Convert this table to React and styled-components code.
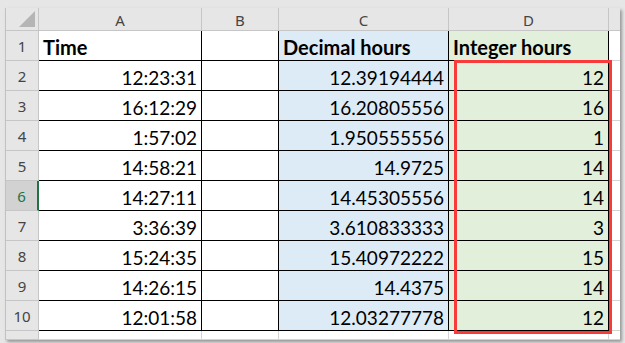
import React from 'react';
import styled, { createGlobalStyle, css } from 'styled-components';

const GlobalStyle = createGlobalStyle`
  html, body {
    margin: 0;
    padding: 0;
    background: #e6e6e6;
  }
`;

// spreadsheet data
const rows = [
  ['12:23:31', '12.39194444', '12'],
  ['16:12:29', '16.20805556', '16'],
  ['1:57:02', '1.950555556', '1'],
  ['14:58:21', '14.9725', '14'],
  ['14:27:11', '14.45305556', '14'],
  ['3:36:39', '3.610833333', '3'],
  ['15:24:35', '15.40972222', '15'],
  ['14:26:15', '14.4375', '14'],
  ['12:01:58', '12.03277778', '12'],
];

const columns = ['A', 'B', 'C', 'D'];
const ACTIVE_ROW = 6;

const Frame = styled.div`
  width: 625px;
  height: 343px;
  box-sizing: border-box;
  padding: 8px 0 0 5px;
  background: #e6e6e6;
  overflow: hidden;
`;

const Sheet = styled.div`
  position: relative;
  display: grid;
  grid-template-columns: 33px 163px 77px 170px 160px 11px;
  grid-template-rows: 23px repeat(10, 30px) 9px;
  width: 615px;
  box-sizing: border-box;
  border-left: 1px solid #c2c2c2;
  background: #fff;
  box-shadow: 2px 2px 3px rgba(0, 0, 0, 0.35);
`;

const HeadCell = styled.div`
  display: flex;
  align-items: center;
  justify-content: center;
  box-sizing: border-box;
  background: ${(p) => (p.$active ? '#d2d2d2' : '#e6e6e6')};
  color: ${(p) => (p.$active ? '#217346' : '#444')};
  font-family: 'Noto Sans', 'Open Sans', sans-serif;
  font-size: 15px;
  border-bottom: 1px solid #c6c6c6;
  border-right: ${(p) =>
    p.$active ? '2px solid #217346' : p.$noRight ? 'none' : '1px solid #c6c6c6'};
  padding-top: 1px;
`;

const Corner = styled(HeadCell)`
  justify-content: flex-end;
  align-items: flex-end;
  padding: 0 3px 3px 0;
`;

const Triangle = styled.div`
  width: 16px;
  height: 16px;
  background: #b5b5b5;
  clip-path: polygon(100% 0, 100% 100%, 0 100%);
`;

const Cell = styled.div`
  display: flex;
  align-items: flex-end;
  justify-content: ${(p) => (p.$align === 'left' ? 'flex-start' : 'flex-end')};
  box-sizing: border-box;
  padding: 0 4px 1px 4px;
  background: ${(p) => p.$bg || '#fff'};
  color: #000;
  font-family: Lato, 'Liberation Sans', sans-serif;
  font-size: ${(p) => (p.$bold ? '20px' : '19px')};
  font-weight: ${(p) => (p.$bold ? 700 : 400)};
  white-space: nowrap;
  ${(p) =>
    p.$table
      ? css`
          border-right: 1px solid #000;
          border-bottom: 1px solid #000;
        `
      : css`
          border-right: ${p.$noRight ? 'none' : '1px solid #d4d4d4'};
          border-bottom: 1px solid #d4d4d4;
        `}
`;

const Highlight = styled.div`
  position: absolute;
  left: 448px;
  top: 52px;
  width: 158px;
  height: 274px;
  box-sizing: border-box;
  border: 3px solid #f73b3b;
  pointer-events: none;
`;

const fills = { C: '#ddebf7', D: '#e2efda' };

function App() {
  return (
    <Frame>
      <GlobalStyle />
      <Sheet>
        <Corner>
          <Triangle />
        </Corner>
        {columns.map((c) => (
          <HeadCell key={c}>{c}</HeadCell>
        ))}
        <HeadCell $noRight />

        <HeadCell>1</HeadCell>
        <Cell $table $align="left" $bold>Time</Cell>
        <Cell $table />
        <Cell $table $align="left" $bold $bg={fills.C}>Decimal hours</Cell>
        <Cell $table $align="left" $bold $bg={fills.D}>Integer hours</Cell>
        <Cell $noRight />

        {rows.map((r, i) => {
          const n = i + 2;
          return (
            <React.Fragment key={n}>
              <HeadCell $active={n === ACTIVE_ROW}>{n}</HeadCell>
              <Cell $table>{r[0]}</Cell>
              <Cell $table />
              <Cell $table $bg={fills.C}>{r[1]}</Cell>
              <Cell $table $bg={fills.D}>{r[2]}</Cell>
              <Cell $noRight />
            </React.Fragment>
          );
        })}

        <HeadCell />
        <Cell />
        <Cell />
        <Cell />
        <Cell />
        <Cell $noRight />

        <Highlight />
      </Sheet>
    </Frame>
  );
}

export default App;
